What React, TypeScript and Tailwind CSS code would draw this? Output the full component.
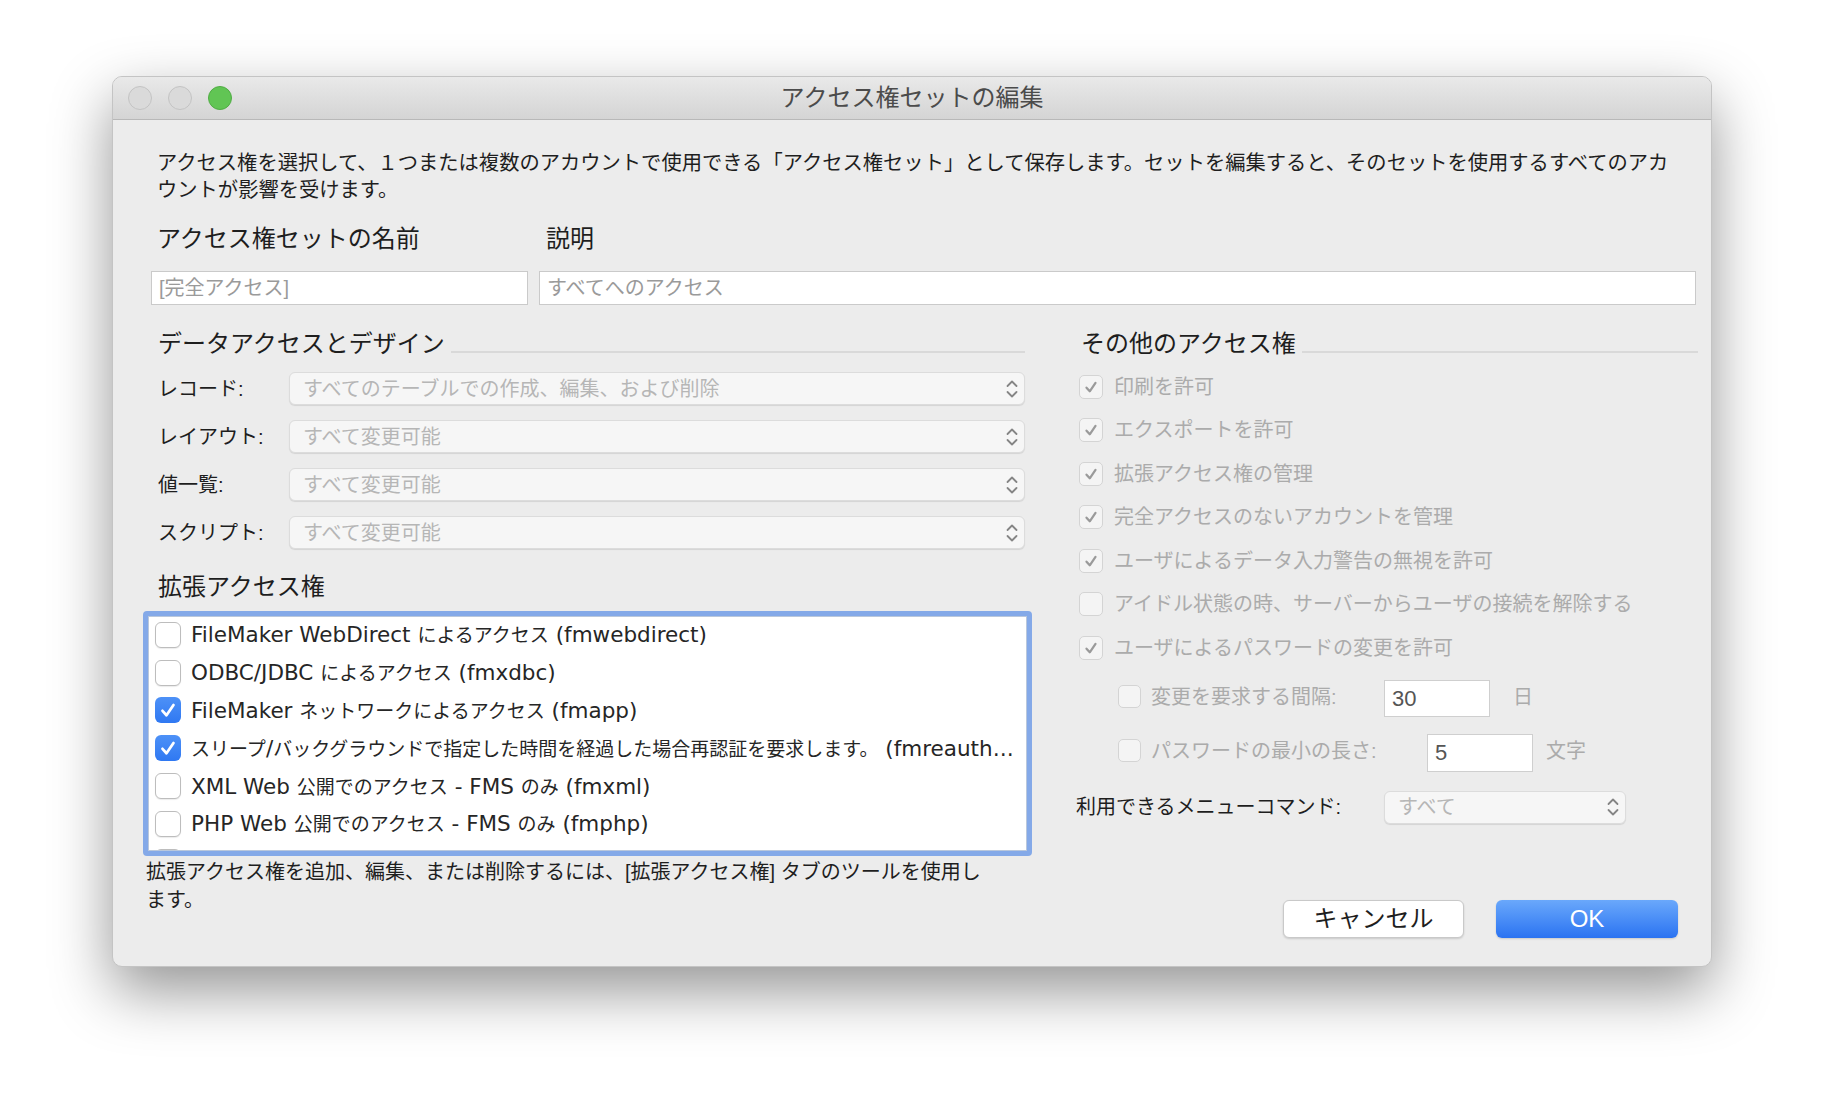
import React from "react";

const Chevrons = () => (
  <svg width="14" height="22" viewBox="0 0 14 22" fill="none">
    <path d="M2.5 8 L7 3.5 L11.5 8" stroke="#858585" strokeWidth="1.8" strokeLinecap="round" strokeLinejoin="round" />
    <path d="M2.5 14 L7 18.5 L11.5 14" stroke="#858585" strokeWidth="1.8" strokeLinecap="round" strokeLinejoin="round" />
  </svg>
);

const Tick = ({ color, size }: { color: string; size: number }) => (
  <svg width={size} height={size} viewBox="0 0 16 16" fill="none">
    <path d="M4 8.6 L6.9 11.8 L12 4.4" stroke={color} strokeWidth="2" strokeLinecap="round" strokeLinejoin="round" />
  </svg>
);

type BoxKind = "on" | "off" | "dimOn" | "dimOff";

const Box = ({ kind, size = 24 }: { kind: BoxKind; size?: number }) => {
  if (kind === "on")
    return (
      <div
        className="shrink-0 rounded-[6px] bg-gradient-to-b from-[#4d91f7] to-[#2f78f2] flex items-center justify-center"
        style={{ width: size, height: size }}
      >
        <Tick color="#ffffff" size={size - 4} />
      </div>
    );
  if (kind === "off")
    return (
      <div
        className="shrink-0 rounded-[6px] bg-white border border-[#bdbdbd] shadow-[0_1px_1px_rgba(0,0,0,0.08)]"
        style={{ width: size, height: size }}
      />
    );
  return (
    <div
      className="shrink-0 rounded-[5px] bg-[#f4f4f4] border border-[#d4d4d4] flex items-center justify-center"
      style={{ width: size, height: size }}
    >
      {kind === "dimOn" && <Tick color="#9a9a9a" size={size - 6} />}
    </div>
  );
};

const Popup = ({ text, className }: { text: string; className: string }) => (
  <div
    className={
      "h-[33px] rounded-[6px] bg-[#f6f6f6] border border-[#dcdcdc] shadow-[0_1px_1px_rgba(0,0,0,0.10)] flex items-center justify-between pl-[13px] pr-[5px] text-[20px] text-[#b6b6b6] " +
      className
    }
  >
    <span>{text}</span>
    <Chevrons />
  </div>
);

const SectionHead = ({ title }: { title: string }) => (
  <div className="flex items-center h-[32px]">
    <span className="text-[24px] text-[#1e1e1e] whitespace-nowrap">{title}</span>
    <div className="flex-1 h-[2px] bg-[#d9d9d9] ml-[6px] mt-[16px]" />
  </div>
);

// latin runs get a wider face than the japanese runs, like the mac list font
const Mixed = ({ text }: { text: string }) => {
  const parts = text.split(/([\u3000-\u30ff\u4e00-\u9fff\uff00-\uffef]+)/).filter((p) => p !== "");
  return (
    <>
      {parts.map((p, i) =>
        /[\u3000-\u30ff\u4e00-\u9fff\uff00-\uffef]/.test(p) ? (
          <span key={i} className="text-[19px] font-['Noto_Sans_CJK_JP',sans-serif]">
            {p}
          </span>
        ) : (
          <span key={i} className="text-[21.5px] font-['DejaVu_Sans',sans-serif]">
            {p}
          </span>
        )
      )}
    </>
  );
};

const layoutRows = [
  { label: "レコード:", value: "すべてのテーブルでの作成、編集、および削除" },
  { label: "レイアウト:", value: "すべて変更可能" },
  { label: "値一覧:", value: "すべて変更可能" },
  { label: "スクリプト:", value: "すべて変更可能" },
];

const extended: { text: string; on: boolean }[] = [
  { text: "FileMaker WebDirect によるアクセス (fmwebdirect)", on: false },
  { text: "ODBC/JDBC によるアクセス (fmxdbc)", on: false },
  { text: "FileMaker ネットワークによるアクセス (fmapp)", on: true },
  { text: "スリープ/バックグラウンドで指定した時間を経過した場合再認証を要求します。 (fmreauthenticate10)", on: true },
  { text: "XML Web 公開でのアクセス - FMS のみ (fmxml)", on: false },
  { text: "PHP Web 公開でのアクセス - FMS のみ (fmphp)", on: false },
];

const others: { text: string; on: boolean }[] = [
  { text: "印刷を許可", on: true },
  { text: "エクスポートを許可", on: true },
  { text: "拡張アクセス権の管理", on: true },
  { text: "完全アクセスのないアカウントを管理", on: true },
  { text: "ユーザによるデータ入力警告の無視を許可", on: true },
  { text: "アイドル状態の時、サーバーからユーザの接続を解除する", on: false },
  { text: "ユーザによるパスワードの変更を許可", on: true },
];

export default function App() {
  return (
    <div className="w-full h-[1116px] bg-white pt-[76px] pl-[112px] font-['Liberation_Sans','Noto_Sans_CJK_JP',sans-serif]">
      <div className="w-[1600px] h-[891px] rounded-[10px] bg-[#ececec] overflow-hidden border border-[#c4c4c4] shadow-[0_24px_60px_rgba(0,0,0,0.42)] flex flex-col">
        {/* title bar */}
        <div className="h-[43px] shrink-0 grid grid-cols-[1fr_auto_1fr] items-center bg-gradient-to-b from-[#e9e9e9] to-[#d4d4d4] border-b border-[#b8b8b8]">
          <div className="flex items-center gap-[16px] pl-[15px]">
            <div className="w-[24px] h-[24px] rounded-full bg-[#dadada] border border-[#c3c3c3]" />
            <div className="w-[24px] h-[24px] rounded-full bg-[#dadada] border border-[#c3c3c3]" />
            <div className="w-[24px] h-[24px] rounded-full bg-[#61c554] border border-[#51ac45]" />
          </div>
          <div className="text-[24px] text-[#4b4b4b] leading-none">アクセス権セットの編集</div>
          <div />
        </div>

        {/* body */}
        <div className="flex-1 pt-[30px]">
          <p className="ml-[44px] w-[1540px] text-[20.3px] leading-[27px] text-[#1e1e1e] whitespace-nowrap">
            アクセス権を選択して、１つまたは複数のアカウントで使用できる「アクセス権セット」として保存します。セットを編集すると、そのセットを使用するすべてのアカ
            <br />
            ウントが影響を受けます。
          </p>

          <div className="mt-[19px] flex h-[32px] items-center text-[24px] text-[#1e1e1e]">
            <span className="ml-[44px] w-[389px]">アクセス権セットの名前</span>
            <span>説明</span>
          </div>

          <div className="mt-[16px] ml-[38px] flex gap-[11px]">
            <div className="w-[377px] h-[34px] bg-white border border-[#cacaca] flex items-center pl-[7px] text-[20px] text-[#9a9a9a]">
              [完全アクセス]
            </div>
            <div className="w-[1157px] h-[34px] bg-white border border-[#cacaca] flex items-center pl-[7px] text-[20px] text-[#9a9a9a]">
              すべてへのアクセス
            </div>
          </div>

          <div className="mt-[23px] ml-[30px] flex gap-[44px]">
            {/* left column */}
            <div className="w-[889px] flex flex-col">
              <div className="pl-[15px] pr-[7px]">
                <SectionHead title="データアクセスとデザイン" />
              </div>
              <div className="mt-[12px] flex flex-col gap-[15px] pl-[15px] pr-[7px]">
                {layoutRows.map((r) => (
                  <div key={r.label} className="flex items-center">
                    <span className="w-[131px] text-[20px] text-[#1e1e1e]">{r.label}</span>
                    <Popup text={r.value} className="flex-1" />
                  </div>
                ))}
              </div>
              <div className="mt-[22px] pl-[15px] h-[32px] flex items-center text-[24px] text-[#1e1e1e]">拡張アクセス権</div>
              <div className="mt-[8px] h-[245px] rounded-[4px] bg-[#84a9e8] p-[5px]">
                <div className="h-full bg-white border border-[#b9c7dc] overflow-hidden">
                  <div className="-mt-[1px]">
                    {extended.map((e) => (
                      <div key={e.text} className="h-[37.8px] flex items-center pl-[6px] pr-[12px]">
                        <Box kind={e.on ? "on" : "off"} size={26} />
                        <div className="ml-[10px] min-w-0 text-[21px] leading-[30px] text-[#262626] truncate font-['DejaVu_Sans',sans-serif]">
                          <Mixed text={e.text} />
                        </div>
                      </div>
                    ))}
                    <div className="h-[37.8px] flex items-center pl-[6px]">
                      <Box kind="off" size={26} />
                    </div>
                  </div>
                </div>
              </div>
              <p className="mt-[2px] ml-[3px] text-[20px] leading-[28px] text-[#1e1e1e] whitespace-nowrap">
                拡張アクセス権を追加、編集、または削除するには、[拡張アクセス権] タブのツールを使用し
                <br />
                ます。
              </p>
            </div>

            {/* right column */}
            <div className="w-[622px] flex flex-col">
              <div className="pl-[5px]">
                <SectionHead title="その他のアクセス権" />
              </div>
              <div className="mt-[5px] flex flex-col">
                {others.map((o) => (
                  <div key={o.text} className="h-[43.5px] flex items-center pl-[3px]">
                    <Box kind={o.on ? "dimOn" : "dimOff"} />
                    <span className="ml-[11px] text-[20px] text-[#ababab]">{o.text}</span>
                  </div>
                ))}
                <div className="h-[54px] flex items-center pl-[42px]">
                  <Box kind="dimOff" size={23} />
                  <span className="ml-[10px] w-[233px] text-[20px] text-[#ababab]">変更を要求する間隔:</span>
                  <div className="w-[106px] h-[37px] mt-[4px] bg-white border border-[#cfcfcf] flex items-center pl-[7px] text-[22px] text-[#555555]">
                    30
                  </div>
                  <span className="ml-[23px] text-[20px] text-[#ababab]">日</span>
                </div>
                <div className="h-[54px] flex items-center pl-[42px]">
                  <Box kind="dimOff" size={23} />
                  <span className="ml-[10px] w-[276px] text-[20px] text-[#ababab]">パスワードの最小の長さ:</span>
                  <div className="w-[106px] h-[38px] mt-[4px] bg-white border border-[#cfcfcf] flex items-center pl-[7px] text-[22px] text-[#555555]">
                    5
                  </div>
                  <span className="ml-[13px] text-[20px] text-[#ababab]">文字</span>
                </div>
              </div>
              <div className="mt-[13px] flex items-center">
                <span className="w-[308px] text-[20px] text-[#1e1e1e]">利用できるメニューコマンド:</span>
                <Popup text="すべて" className="w-[242px]" />
              </div>
              <div className="mt-[76px] flex justify-end gap-[32px] mr-[20px]">
                <button className="w-[181px] h-[38px] rounded-[6px] bg-white border border-[#c9c9c9] shadow-[0_1px_2px_rgba(0,0,0,0.15)] text-[24px] text-[#1e1e1e]">
                  キャンセル
                </button>
                <button className="w-[182px] h-[38px] rounded-[6px] bg-gradient-to-b from-[#6aa8fb] to-[#2a72f1] shadow-[0_1px_2px_rgba(0,0,0,0.15)] text-[24px] text-white">
                  OK
                </button>
              </div>
            </div>
          </div>
        </div>
      </div>
    </div>
  );
}
